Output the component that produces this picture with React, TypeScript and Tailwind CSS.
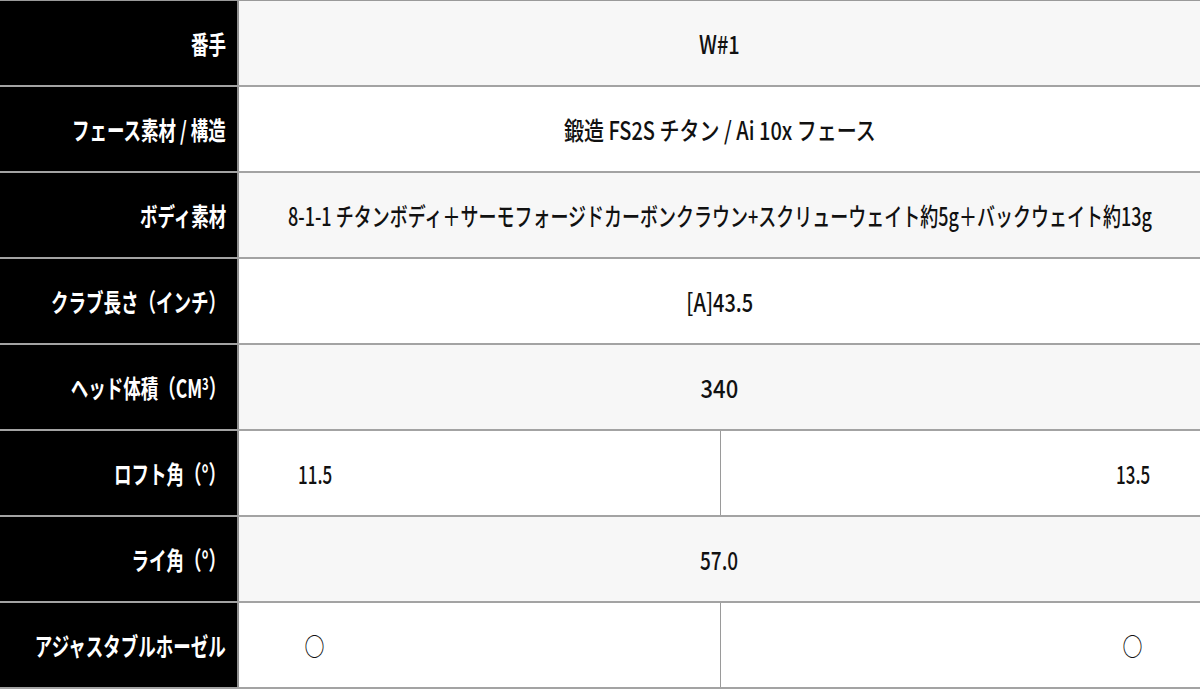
import type { ReactNode } from 'react'

const font = { fontFamily: '"Noto Sans CJK JP", "Noto Sans", sans-serif' }

interface SpecRow {
  label: ReactNode
  value?: ReactNode
  split?: [ReactNode, ReactNode]
  squeeze?: string
}

const rows: SpecRow[] = [
  { label: '番手', value: 'W#1' },
  { label: 'フェース素材 / 構造', value: '鍛造 FS2S チタン / Ai 10x フェース' },
  {
    label: 'ボディ素材',
    value: '8-1-1 チタンボディ＋サーモフォージドカーボンクラウン+スクリューウェイト約5g＋バックウェイト約13g',
    squeeze: 'scale-x-[0.72]',
  },
  { label: 'クラブ長さ（インチ）', value: '[A]43.5' },
  {
    label: (
      <>
        ヘッド体積（CM<span className="text-[16px] relative -top-[8px]">3</span>）
      </>
    ),
    value: '340',
    squeeze: 'scale-x-[0.88]',
  },
  { label: 'ロフト角（°）', split: ['11.5', '13.5'], squeeze: 'scale-x-[0.68]' },
  { label: 'ライ角（°）', value: '57.0', squeeze: 'scale-x-[0.76]' },
  { label: 'アジャスタブルホーゼル', split: ['○', '○'] },
]

function Squeezed({ children, className }: { children: ReactNode; className: string }) {
  return <span className={`inline-block whitespace-nowrap ${className}`}>{children}</span>
}

export default function App() {
  return (
    <div className="w-[1200px] h-[691px] bg-white overflow-hidden" style={font}>
      <div className="flex flex-col border-t border-[#9a9a9a]">
        {rows.map((row, i) => {
          const squeeze = row.squeeze ?? 'scale-x-[0.8]'
          return (
            <div
              key={i}
              className={`flex h-[86px] border-b-2 border-[#a3a3a3] ${
                i % 2 === 0 ? 'bg-[#f7f7f7]' : 'bg-white'
              }`}
            >
              <div className="w-[239px] shrink-0 bg-black border-r-2 border-[#8f8f8f] flex items-center justify-end pr-[11px] text-white font-bold text-[25px] leading-none">
                <Squeezed className="scale-x-[0.7] origin-right">{row.label}</Squeezed>
              </div>
              {row.split ? (
                <div className="flex flex-1 min-w-0 text-[25px] leading-none font-medium text-[#111]">
                  <div className="w-[482px] border-r border-[#9a9a9a] flex items-center pl-[36px]">
                    <div className="w-[80px] flex justify-center">
                      <Squeezed className={`${squeeze} origin-center`}>{row.split[0]}</Squeezed>
                    </div>
                  </div>
                  <div className="flex-1 flex items-center justify-end pr-[27px]">
                    <div className="w-[80px] flex justify-center">
                      <Squeezed className={`${squeeze} origin-center`}>{row.split[1]}</Squeezed>
                    </div>
                  </div>
                </div>
              ) : (
                <div className="flex-1 min-w-0 flex items-center justify-center text-[25px] leading-none font-medium text-[#111]">
                  <Squeezed className={`${squeeze} origin-center`}>{row.value}</Squeezed>
                </div>
              )}
            </div>
          )
        })}
      </div>
    </div>
  )
}
